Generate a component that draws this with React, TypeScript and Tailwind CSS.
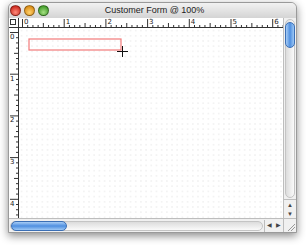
import React from "react";

const PX = 41.7;

function TopRuler() {
  const ticks = [];
  const start = 3;
  for (let i = 0; i <= 6 * 8 + 2; i++) {
    const x = start + (i * PX) / 8;
    if (x > 264) break;
    const m = i % 8;
    const h = m === 0 ? 9 : m === 4 ? 5 : 3;
    ticks.push(<line key={i} x1={x + 0.5} x2={x + 0.5} y1={10 - h} y2={10} stroke="#333" strokeWidth={1} />);
    if (m === 0) {
      ticks.push(
        <text key={"t" + i} x={x + 2} y={6} fontSize={7} fill="#222" fontFamily="'DejaVu Sans', sans-serif">
          {i / 8}
        </text>
      );
    }
  }
  return (
    <svg width={265} height={10} className="block">
      <line x1={0} x2={265} y1={9.5} y2={9.5} stroke="#333" />
      {ticks}
    </svg>
  );
}

function LeftRuler() {
  const ticks = [];
  const start = 4;
  for (let i = 0; i <= 5 * 8; i++) {
    const y = start + (i * PX) / 8;
    if (y > 190) break;
    const m = i % 8;
    const w = m === 0 ? 9 : m === 4 ? 5 : 3;
    ticks.push(<line key={i} y1={y + 0.5} y2={y + 0.5} x1={10 - w} x2={10} stroke="#333" strokeWidth={1} />);
    if (m === 0) {
      ticks.push(
        <text key={"t" + i} x={1} y={y + 7} fontSize={7} fill="#222" fontFamily="'DejaVu Sans', sans-serif">
          {i / 8}
        </text>
      );
    }
  }
  return (
    <svg width={10} height={192} className="block">
      <line x1={9.5} x2={9.5} y1={0} y2={192} stroke="#333" />
      {ticks}
    </svg>
  );
}

function Light({ c1, c2 }: { c1: string; c2: string }) {
  return (
    <div
      className="w-[11px] h-[11px] rounded-full border border-[rgba(0,0,0,0.35)]"
      style={{ background: `radial-gradient(circle at 50% 70%, ${c1} 0%, ${c2} 80%)` }}
    />
  );
}

export default function App() {
  return (
    <div className="w-[306px] h-[245px] bg-white relative overflow-hidden" style={{ fontFamily: "'Liberation Sans', Arial, sans-serif" }}>
      <div className="ml-[8px] mt-[2px] w-[289px] h-[231px] rounded-t-[6px] bg-[#e6e6e6] shadow-[0_3px_8px_rgba(0,0,0,0.45)] flex flex-col overflow-hidden border border-[#9a9a9a]">
        {/* Title bar */}
        <div className="h-[15px] flex items-center bg-gradient-to-b from-[#f2f2f2] to-[#d4d4d4] relative shrink-0">
          <div className="flex gap-[3px] ml-[1px] items-center">
            <Light c1="#ff8a7a" c2="#c9261b" />
            <Light c1="#ffd16e" c2="#d98a12" />
            <Light c1="#a6e083" c2="#3f9a27" />
          </div>
          <div className="absolute inset-0 flex items-center justify-center text-[9px] text-[#222] pl-[4px]">
            Customer Form @ 100%
          </div>
        </div>
        {/* body */}
        <div className="flex flex-1 min-h-0">
          <div className="flex flex-col flex-1 min-w-0">
            <div className="flex h-[10px] shrink-0 bg-white">
              <div className="w-[10px] h-[10px] border-r border-b border-[#333] bg-white relative">
                <div className="absolute left-[1px] top-[1px] w-[6px] h-[6px] border border-[#333]" />
              </div>
              <TopRuler />
            </div>
            <div className="flex flex-1 min-h-0 bg-white">
              <div className="w-[10px] shrink-0">
                <LeftRuler />
              </div>
              <div className="flex-1 relative bg-[radial-gradient(circle,#f3f3f3_0.7px,transparent_0.8px)] bg-[length:5.2px_5.2px]">
                <svg className="absolute left-[9px] top-[10px]" width={100} height={19}>
                  <rect x={1} y={1} width={92} height={11} fill="none" stroke="#f27a7a" strokeWidth={1.2} />
                  <line x1={94.5} x2={94.5} y1={8} y2={19} stroke="#111" />
                  <line x1={89} x2={100} y1={13.5} y2={13.5} stroke="#111" />
                </svg>
              </div>
            </div>
            {/* horizontal scrollbar */}
            <div className="h-[14px] shrink-0 flex items-center bg-[#f0f0f0] border-t border-[#bdbdbd]">
              <div className="flex-1 h-[10px] mx-[1px] rounded-full bg-gradient-to-b from-[#dcdcdc] to-[#fafafa] relative border border-[#c4c4c4]">
                <div className="absolute left-[0px] top-[-1px] w-[56px] h-[10px] rounded-full border border-[#3b6fb5] bg-gradient-to-b from-[#a8cdf5] via-[#4e8fe0] to-[#9ec8f4]" />
              </div>
              <div className="w-[19px] h-[12px] flex items-center justify-around text-[6px] text-[#444] border-l border-[#bdbdbd]">
                <span>◀</span>
                <span>▶</span>
              </div>
            </div>
          </div>
          {/* vertical scrollbar */}
          <div className="w-[13px] shrink-0 flex flex-col bg-[#f0f0f0] border-l border-[#bdbdbd]">
            <div className="flex-1 w-[10px] mx-auto my-[1px] rounded-full bg-gradient-to-r from-[#dcdcdc] to-[#fafafa] relative border border-[#c4c4c4]">
              <div className="absolute left-[-1px] top-[2px] w-[10px] h-[26px] rounded-full border border-[#3b6fb5] bg-gradient-to-r from-[#a8cdf5] via-[#4e8fe0] to-[#9ec8f4]" />
            </div>
            <div className="h-[19px] flex flex-col items-center justify-around text-[6px] text-[#444] border-t border-[#bdbdbd]">
              <span className="leading-none">▲</span>
              <span className="leading-none">▼</span>
            </div>
            <div className="h-[14px] border-t border-[#bdbdbd] relative">
              <svg className="absolute right-[1px] bottom-[1px]" width={9} height={9}>
                <line x1={2} y1={9} x2={9} y2={2} stroke="#999" />
                <line x1={5} y1={9} x2={9} y2={5} stroke="#999" />
              </svg>
            </div>
          </div>
        </div>
      </div>
    </div>
  );
}
